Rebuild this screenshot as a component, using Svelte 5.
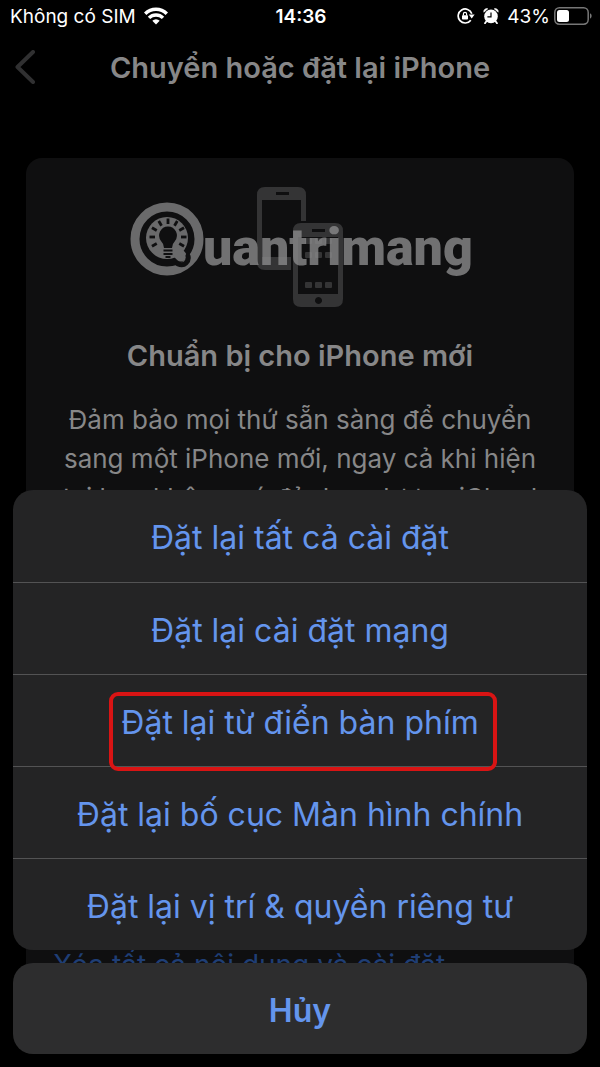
<script lang="ts">
	type Action = { label: string; highlighted?: boolean };

	const actions: Action[] = [
		{ label: 'Đặt lại tất cả cài đặt' },
		{ label: 'Đặt lại cài đặt mạng' },
		{ label: 'Đặt lại từ điển bàn phím', highlighted: true },
		{ label: 'Đặt lại bố cục Màn hình chính' },
		{ label: 'Đặt lại vị trí & quyền riêng tư' }
	];

	// rays around the bulb, in degrees
	const rays = [-120, -90, -60, -30, 0, 30, 60, 90, 120];
	const dots = [305, 315, 325];
</script>

<div class="screen">
	<header class="status">
		<div class="status__group">
			<span>Không có SIM</span>
			<svg class="status__wifi" viewBox="0 0 24 18" aria-hidden="true">
				<g fill="none" stroke="#fff" stroke-width="3.4">
					<path d="M1.2 6.7a15.3 15.3 0 0 1 21.6 0" />
					<path d="M5 10.9a9.9 9.9 0 0 1 14 0" />
				</g>
				<path d="M12 17.6l-3.7-3.8a5.3 5.3 0 0 1 7.4 0z" fill="#fff" />
			</svg>
		</div>
		<span class="status__time">14:36</span>
		<div class="status__group status__group--end">
			<svg class="status__lock" viewBox="0 0 18 16" aria-hidden="true">
				<path d="M13.8 12.2a7 7 0 1 1 1-6.5" fill="none" stroke="#fff" stroke-width="1.7" />
				<path d="M11.800 6.600h5.800l-2.900 4z" fill="#fff" />
				<rect x="5" y="7.200" width="6" height="4.400" rx=".8" fill="#fff" />
				<path d="M6.400 7.400V5.900a1.600 1.600 0 0 1 3.200 0v1.500" fill="none" stroke="#fff" stroke-width="1.2" />
			</svg>
			<svg class="status__alarm" viewBox="0 0 16 16" aria-hidden="true">
				<circle cx="8" cy="8.4" r="6.8" fill="#fff" />
				<path d="M.8 4.2A3 3 0 0 1 4.800.8zM15.200 4.200A3 3 0 0 0 11.200.8z" fill="#fff" stroke="#fff" stroke-width=".6" />
				<path d="M3.800 12.800l-1.800 2.400M12.200 12.800l1.800 2.400" stroke="#fff" stroke-width="1.8" stroke-linecap="round" />
				<path d="M8 4.400v4.400H4.400" fill="none" stroke="#000" stroke-width="1.2" />
			</svg>
			<span>43%</span>
			<svg class="status__battery" viewBox="0 0 38 18" aria-hidden="true">
				<rect x=".8" y=".8" width="33.4" height="16.4" rx="4.6" fill="none" stroke="#777" stroke-width="1.5" />
				<rect x="3" y="3" width="12" height="12" rx="2.5" fill="#fff" />
				<path d="M36 6.300a3 3 0 0 1 0 5.400z" fill="#777" />
			</svg>
		</div>
	</header>

	<nav class="navbar">
		<button class="navbar__back" type="button" aria-label="Quay lại">
			<svg viewBox="0 0 20 34" aria-hidden="true">
				<path d="M18 2L2.500 17L18 32" fill="none" stroke="#303031" stroke-width="4" stroke-linecap="round" stroke-linejoin="round" />
			</svg>
		</button>
		<h1 class="navbar__title">Chuyển hoặc đặt lại iPhone</h1>
	</nav>

	<main class="content">
		<section class="card">
			<svg class="card__art" viewBox="130 186 348 122" role="img" aria-label="Quantrimang">
				<g fill="#343435" fill-rule="evenodd">
					<path d="M265 187h33q8 0 8 8v26h-5v-21h-39v57h29v13h-26q-8 0-8-8v-67q0-8 8-8zM276 192v3h13v-3z" />
					<path d="M301 223h34q8 0 8 8v68q0 8-8 8h-34q-8 0-8-8v-68q0-8 8-8zM298 237v57h40v-57zM312 229v3h13v-3zM318.500 297a3.500 3.500 0 1 0 .01 0z" />
					{#each dots as x}
						<rect {x} y="238" width="7" height="6" rx="1" />
						<rect {x} y="252" width="7" height="6" rx="1" />
						<rect {x} y="282" width="7" height="6" rx="1" />
					{/each}
				</g>
				<circle cx="167" cy="239" r="32" fill="none" stroke="#6a6a6b" stroke-width="9" />
				<circle cx="167" cy="238" r="21" fill="#6a6a6b" />
				<path d="M174 249l7 7" stroke="#6a6a6b" stroke-width="11" stroke-linecap="round" />
				<path d="M178 264q5 2 8-1 3-3 2-7" fill="none" stroke="#0f0f10" stroke-width="5" stroke-linecap="round" />
				<path d="M168 226.500a9 9 0 0 1 7 14.500q-3 3-3 7h-8q0-4-3-7a9 9 0 0 1 7-14.500z" fill="#0f0f10" />
				<path d="M163.500 250.500h9M163.500 254h9M165.500 257h5" stroke="#0f0f10" stroke-width="2.200" />
				<g stroke="#0f0f10" stroke-width="2.800">
					{#each rays as angle}
						<path d="M168 218.500v5.500" transform={`rotate(${angle} 168 237)`} />
					{/each}
				</g>
				<text class="card__brand" x="203" y="265">uantrimang</text>
			</svg>
			<h2 class="card__title">Chuẩn bị cho iPhone mới</h2>
			<p class="card__text">
				Đảm bảo mọi thứ sẵn sàng để chuyển sang một iPhone mới, ngay cả khi hiện tại bạn không có đủ dung lượng iCloud
			</p>
		</section>

		<section class="list">
			<a class="list__link" href="#erase">Xóa tất cả nội dung và cài đặt</a>
		</section>
	</main>

	<div class="sheet" role="dialog" aria-label="Đặt lại">
		<div class="sheet__actions">
			{#each actions as action}
				<button class="sheet__action" type="button">
					<span class:marked={action.highlighted}>{action.label}</span>
				</button>
			{/each}
		</div>
		<button class="sheet__cancel" type="button">Hủy</button>
	</div>
</div>

<style>
	:global(body) {
		margin: 0;
		background: #000;
	}

	button {
		padding: 0;
		border: 0;
		background: none;
		font-family: inherit;
		cursor: pointer;
	}

	svg {
		display: block;
	}

	h1,
	h2,
	p {
		margin: 0;
	}

	.screen {
		position: relative;
		display: flex;
		flex-direction: column;
		height: 100vh;
		overflow: hidden;
		background: #000;
		color: #878788;
		font-family: Inter, 'Noto Sans', sans-serif;
	}

	/* Status bar */
	.status {
		display: grid;
		grid-template-columns: 1fr auto 1fr;
		align-items: center;
		height: 32px;
		padding: 0 8px 0 10px;
		color: #fff;
		font-size: 19px;
	}

	.status__group {
		display: flex;
		align-items: center;
		gap: 8px;
	}

	.status__group--end {
		justify-content: flex-end;
	}

	.status__time {
		font-weight: 600;
	}

	.status__wifi {
		width: 24px;
		height: 18px;
	}

	.status__lock {
		width: 18px;
		height: 16px;
	}

	.status__alarm {
		width: 16px;
		height: 16px;
	}

	.status__battery {
		width: 38px;
		height: 18px;
		margin-left: -4px;
	}

	/* Navigation bar */
	.navbar {
		display: grid;
		grid-template-columns: 20px 1fr 20px;
		align-items: center;
		height: 70px;
		padding: 0 15px;
	}

	.navbar__back svg {
		width: 20px;
		height: 34px;
	}

	.navbar__title {
		font-size: 29px;
		font-weight: 600;
		text-align: center;
	}

	/* Page content */
	.content {
		display: flex;
		flex: 1;
		flex-direction: column;
		min-height: 0;
		padding: 56px 26px 62px;
	}

	.card,
	.list {
		background: #0f0f10;
		border-radius: 16px;
	}

	.card {
		display: flex;
		flex-direction: column;
		align-items: center;
		padding: 28px 36px 32px;
		text-align: center;
	}

	.card__art {
		width: 348px;
		height: 122px;
		margin-right: -8px;
	}

	.card__brand {
		fill: #8a8a8b;
		fill-opacity: 0.8;
		font-family: Roboto, Inter, sans-serif;
		font-size: 52px;
		font-weight: 900;
	}

	.card__title {
		margin-top: 28px;
		font-size: 29px;
		font-weight: 600;
		line-height: 40px;
	}

	.card__text {
		margin-top: 24px;
		font-size: 26px;
		line-height: 39px;
	}

	.list {
		margin-top: auto;
		padding: 20px 27px;
	}

	.list__link {
		color: #1f3e75;
		font-size: 28px;
		line-height: 40px;
		text-decoration: none;
	}

	/* Action sheet */
	.sheet {
		position: absolute;
		right: 13px;
		bottom: 13px;
		left: 13px;
		display: flex;
		flex-direction: column;
		gap: 13px;
	}

	.sheet__actions {
		display: flex;
		flex-direction: column;
		background: #242425;
		border-radius: 20px;
	}

	.sheet__action,
	.sheet__cancel {
		min-height: 92px;
		padding-top: 4px;
		color: #6495ed;
		font-size: 32px;
		line-height: 40px;
	}

	.sheet__action + .sheet__action {
		border-top: 1px solid #535354;
	}

	.sheet__cancel {
		min-height: 91px;
		background: #2d2d2e;
		border-radius: 20px;
		font-weight: 600;
	}

	.marked {
		position: relative;
	}

	/* frame around the chosen action */
	.marked::after {
		position: absolute;
		inset: -11px -18px -29px -12px;
		border: 4px solid #d91414;
		border-radius: 9px;
		content: '';
	}
</style>
